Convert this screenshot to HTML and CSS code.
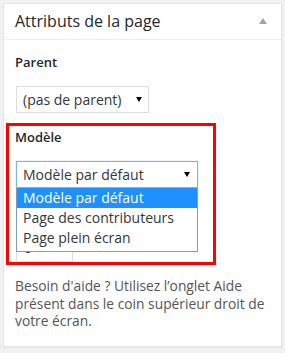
FILE: index.html
```html
<!DOCTYPE html>
<html lang="fr">
<head>
  <meta charset="UTF-8">
  <title>Attributs de la page</title>
  <link rel="stylesheet" href="styles.css">
</head>
<body>
  <div class="postbox">
    <div class="postbox-header">
      <h2 class="hndle">Attributs de la page</h2>
      <svg class="toggle" width="8" height="6" viewBox="0 0 8 6"><path d="M0 6 L4 0 L8 6 Z" fill="#a0a5aa"/></svg>
    </div>
    <div class="inside">
      <p class="label">Parent</p>
      <div class="select select-parent">
        <span class="select-value">(pas de parent)</span>
        <svg class="arrow" width="6" height="5" viewBox="0 0 6 5"><path d="M0 0 L6 0 L3 5 Z" fill="#000"/></svg>
      </div>

      <!-- red annotation round the template field -->
      <div class="callout">
        <p class="label">Modèle</p>
        <div class="select-wrap">
          <div class="select select-template is-open">
            <span class="select-value">Modèle par défaut</span>
            <svg class="arrow" width="6" height="5" viewBox="0 0 6 5"><path d="M0 0 L6 0 L3 5 Z" fill="#000"/></svg>
          </div>
          <ul class="dropdown">
            <li class="selected">Modèle par défaut</li>
            <li>Page des contributeurs</li>
            <li>Page plein écran</li>
          </ul>
        </div>
        <div class="order-input">0</div>
      </div>

      <p class="help">Besoin d'aide ? Utilisez l’onglet Aide présent dans le coin supérieur droit de votre écran.</p>
    </div>
  </div>
</body>
</html>
```

FILE: styles.css
```css
body {
  margin: 0;
  padding: 3px;
  background: #f1f1f1;
  font-family: "Open Sans", "Noto Sans", sans-serif;
  color: #23282d;
}
.postbox {
  width: 277px;
  background: #fff;
  border: 1px solid #e5e5e5;
  box-shadow: 0 1px 1px rgba(0, 0, 0, 0.04);
}
.postbox-header {
  display: flex;
  align-items: center;
  justify-content: space-between;
  height: 35px;
  padding: 0 14px 0 11px;
  border-bottom: 1px solid #eee;
}
.hndle {
  margin: 0;
  font-size: 16px;
  font-weight: 400;
  line-height: 35px;
  color: #23282d;
}
.toggle {
  display: block;
  margin-top: -1px;
}
.inside {
  padding: 13px 11px 16px;
}
.label {
  margin: 0;
  font-size: 13px;
  font-weight: 600;
  line-height: 18px;
}
.select {
  display: flex;
  align-items: center;
  justify-content: space-between;
  box-sizing: border-box;
  height: 27px;
  margin-left: 1px;
  padding: 0 6px 0 6px;
  border: 1px solid #ddd;
  font-size: 14px;
  line-height: 25px;
  color: #32373c;
  background: #fff;
}
.select-parent {
  width: 133px;
  margin-top: 15px;
}
.select-template {
  width: 182px;
  padding-right: 7px;
  border-color: #7fb3e4;
  box-shadow: 0 0 1px rgba(30, 140, 190, 0.5);
}
.arrow {
  display: block;
}
.callout {
  box-sizing: border-box;
  width: 210px;
  height: 142px;
  margin: 10px 0 0 -9px;
  padding: 2px 0 0 6px;
  border: 3px solid #f00;
  overflow: hidden;
}
.select-wrap {
  position: relative;
  margin-top: 15px;
}
.dropdown {
  position: absolute;
  top: 27px;
  left: 1px;
  z-index: 2;
  box-sizing: border-box;
  width: 182px;
  margin: 0;
  padding: 0 0 3px;
  list-style: none;
  background: #fff;
  border: 1px solid #7f9db9;
  border-top: 0;
}
.dropdown li {
  height: 20px;
  padding-left: 6px;
  font-size: 14px;
  line-height: 20px;
  color: #32373c;
}
.dropdown .selected {
  background: #1e90ff;
  color: #fff;
}
.order-input {
  box-sizing: border-box;
  width: 57px;
  height: 28px;
  margin: 46px 0 0 1px;
  padding-left: 7px;
  border: 1px solid #ddd;
  font-size: 14px;
  line-height: 26px;
  color: #32373c;
}
.help {
  margin: 12px 0 0;
  font-size: 13.8px;
  line-height: 17.5px;
  color: #555;
}
```
